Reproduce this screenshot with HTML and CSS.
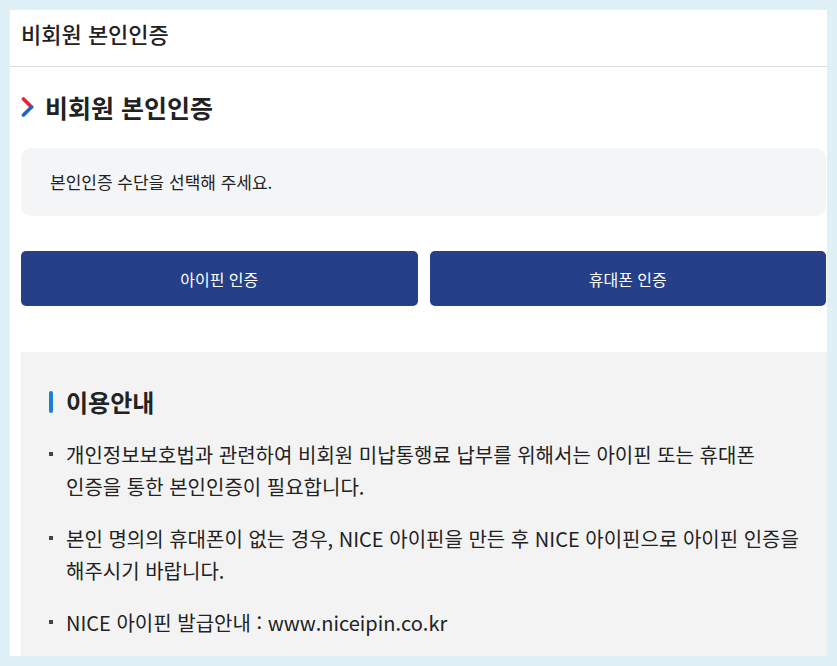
FILE: index.html
```html
<!DOCTYPE html>
<html lang="ko">

<head>
    <meta charset="utf-8">
    <title>비회원 본인인증</title>
    <link rel="stylesheet" href="styles.css">
</head>

<body>
    <div class="panel">
        <div class="panel-header">비회원 본인인증</div>
        <div class="panel-body">
            <h2 class="page-title">
                <svg class="chevron" width="14" height="22" viewBox="0 0 14 22">
                    <path d="M2.5 3 L10.5 11" stroke="#e8213a" stroke-width="3.6" stroke-linecap="round" fill="none" />
                    <path d="M10.5 11 L2.5 19" stroke="#1f64c8" stroke-width="3.6" stroke-linecap="round" fill="none" />
                </svg>
                비회원 본인인증
            </h2>
            <div class="notice">본인인증 수단을 선택해 주세요.</div>
            <div class="auth-buttons">
                <button type="button" class="auth-btn">아이핀 인증</button>
                <button type="button" class="auth-btn">휴대폰 인증</button>
            </div>
            <div class="guide">
                <h3 class="guide-title">이용안내</h3>
                <ul class="guide-list">
                    <li>개인정보보호법과 관련하여 비회원 미납통행료 납부를 위해서는 아이핀 또는 휴대폰 인증을 통한 본인인증이 필요합니다.</li>
                    <li>본인 명의의 휴대폰이 없는 경우, NICE 아이핀을 만든 후 NICE 아이핀으로 아이핀 인증을 해주시기 바랍니다.</li>
                    <li>NICE 아이핀 발급안내 : www.niceipin.co.kr</li>
                </ul>
            </div>
        </div>
    </div>
</body>

</html>
```

FILE: styles.css
```css
body {
    margin: 0;
    background: #dff1f7;
    font-family: "Noto Sans CJK KR", "Noto Sans", sans-serif;
    color: #222;
    overflow: hidden;
    word-break: keep-all;
}

.panel {
    margin: 10px 10px 0 10px;
    width: 817px;
    height: 646px;
    background: #fff;
    overflow: hidden;
}

.panel-header {
    height: 56px;
    line-height: 46px;
    padding-left: 11px;
    font-size: 22px;
    font-weight: 500;
    border-bottom: 1px solid #dcdcdc;
}

.panel-body {
    padding-left: 11px;
}

.page-title {
    display: flex;
    align-items: center;
    gap: 10px;
    margin: 0;
    padding-top: 23px;
    height: 34px;
    margin-bottom: 24px;
    font-size: 25px;
    font-weight: 700;
    line-height: 34px;
}

.chevron {
    display: block;
}

.notice {
    height: 68px;
    line-height: 68px;
    padding-left: 29px;
    background: #f3f5f7;
    border-radius: 10px;
    font-size: 17px;
    margin-right: 1px;
}

.auth-buttons {
    display: flex;
    gap: 12px;
    margin-top: 35px;
    margin-right: 1px;
}

.auth-btn {
    flex: 1;
    height: 55px;
    border: 0;
    border-radius: 5px;
    background: #263f89;
    color: #fff;
    font-family: inherit;
    font-size: 16px;
    font-weight: 400;
}

.guide {
    margin-top: 46px;
    padding: 34px 27px 40px 28px;
    background: #f3f3f3;
}

.guide-title {
    display: flex;
    align-items: center;
    margin: 0;
    font-size: 24px;
    font-weight: 700;
    line-height: 32px;
}

.guide-title::before {
    content: "";
    width: 4px;
    height: 22px;
    margin-right: 13px;
    border-radius: 2px;
    background: #1a7fd8;
}

.guide-list {
    margin: 21px 0 0 0;
    padding: 0;
    list-style: none;
}

.guide-list li {
    position: relative;
    padding-left: 17px;
    margin-bottom: 20px;
    font-size: 20px;
    line-height: 32px;
}

.guide-list li::before {
    content: "";
    position: absolute;
    left: 0;
    top: 13px;
    width: 4px;
    height: 4px;
    background: #444;
}
```
